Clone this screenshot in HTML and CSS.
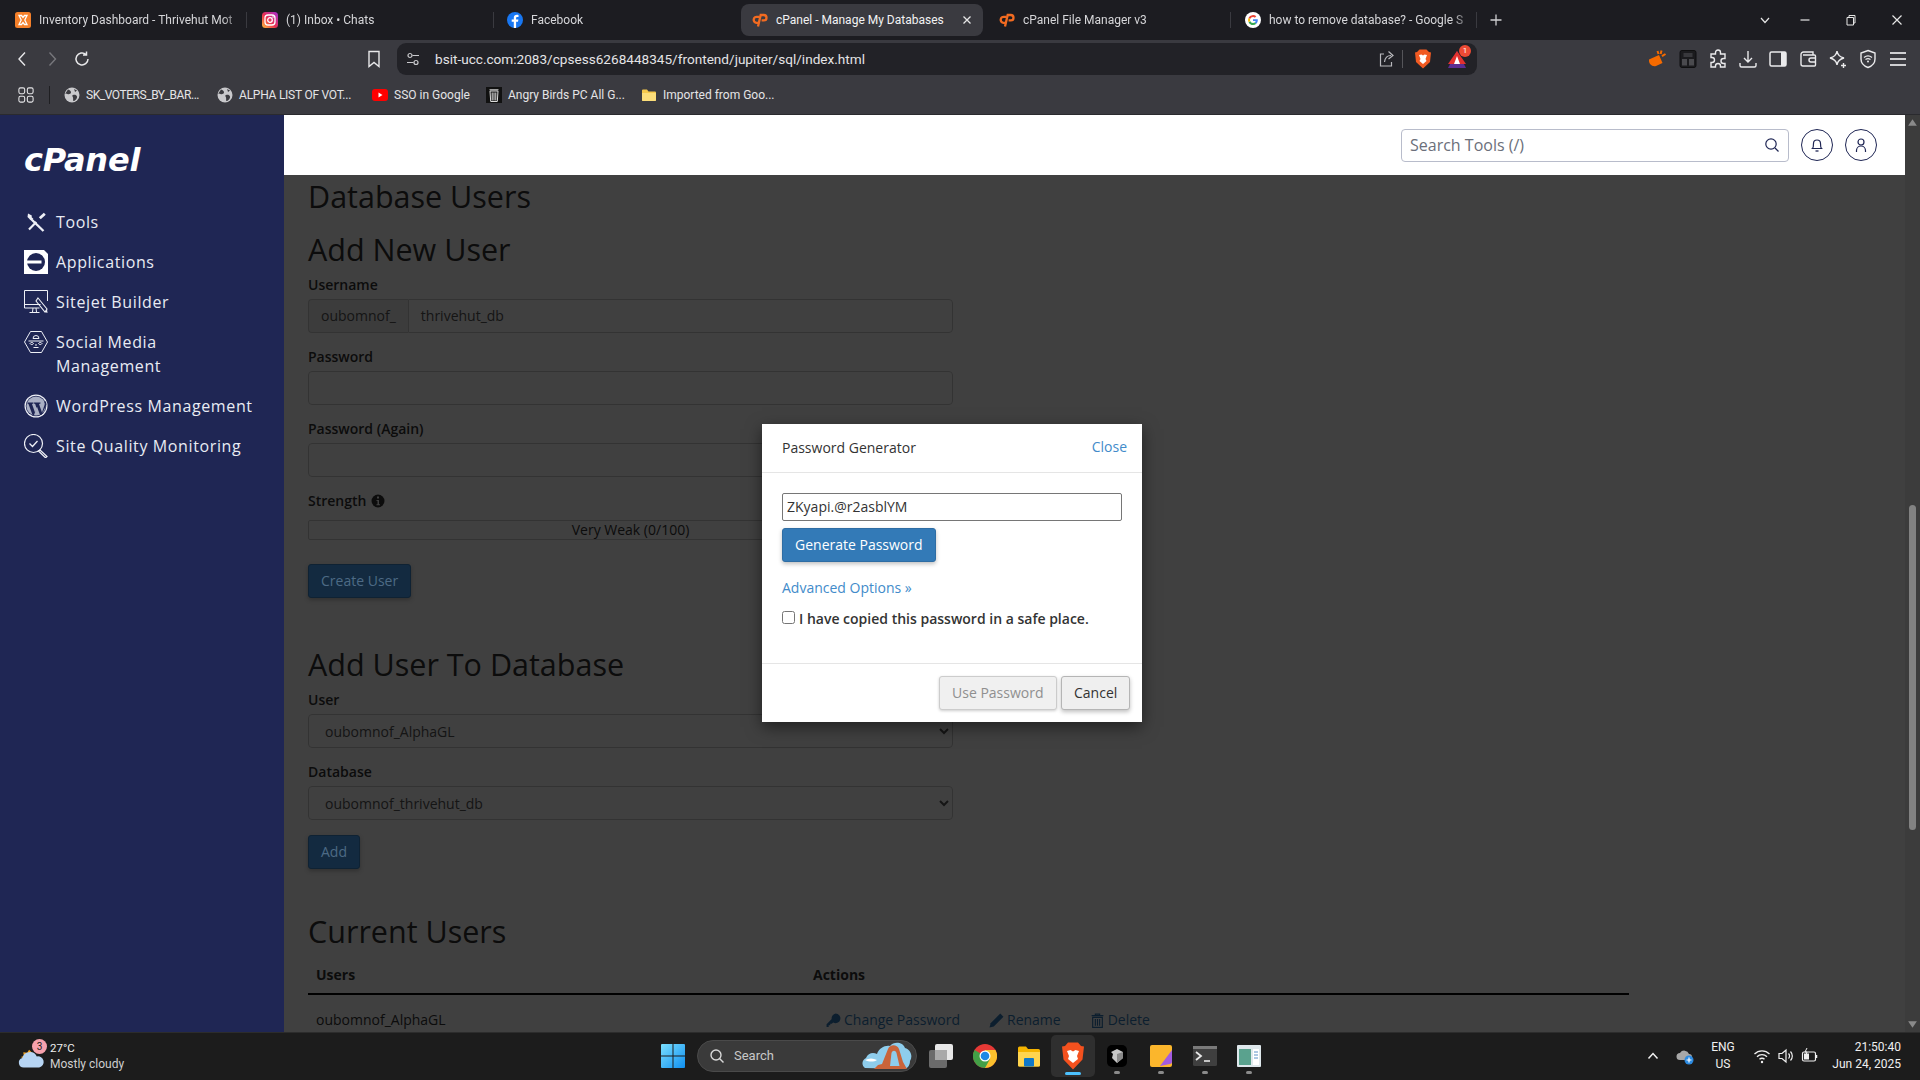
FILE: index.html
```html
<!DOCTYPE html>
<html lang="en">
<head>
<meta charset="utf-8">
<title>cPanel - Manage My Databases</title>
<link rel="stylesheet" href="styles.css">
</head>
<body>
<svg class="defs" width="0" height="0" aria-hidden="true">
  <symbol id="cp" viewBox="0 0 16 16">
    <path d="M7.600 4.800H5a3 3 0 0 0-.6 6H6.300" fill="none" stroke="#f26b21" stroke-width="2.300"/>
    <path d="M6 14.500L8.700 3h3.100a2.700 2.700 0 0 1 0 5.400H9.600" fill="none" stroke="#f26b21" stroke-width="2.300"/>
  </symbol>
  <symbol id="globe" viewBox="0 0 16 16">
    <circle cx="8" cy="8" r="7.500" fill="#c9c9cc"/>
    <path d="M4 2.500c2 .5 3 1.500 3 3S4.500 7.500 3.500 7 1.500 6 1 7M9 8c2-.5 3.500 0 4 1.500s-1.500 4-3 4.500-.5-2-1-3.500S7.500 8.500 9 8zM10 1.500c1 1 1.500 1.500 3 2l-2 1.500z" fill="#3b3b40"/>
  </symbol>
</svg>

<header class="tabstrip">
  <div class="tab tab-sep">
    <svg class="ti" viewBox="0 0 16 16"><rect width="16" height="16" rx="2.500" fill="#f5802a"/><path d="M4 3.500h2.500L8 5.500l1.500-2H12l-2.200 4.500L12 12.500H9.500L8 10.500l-1.500 2H4l2.200-4.500z" fill="none" stroke="#fff" stroke-width="1.300"/></svg>
    <span class="tt">Inventory Dashboard - Thrivehut Mot</span>
  </div>
  <div class="tab tab-sep">
    <svg class="ti" viewBox="0 0 16 16"><defs><linearGradient id="ig" x1="0" y1="1" x2="1" y2="0"><stop offset="0" stop-color="#fdc13c"/><stop offset=".45" stop-color="#e8304f"/><stop offset="1" stop-color="#a52fd3"/></linearGradient></defs><rect width="16" height="16" rx="3.500" fill="url(#ig)"/><rect x="3" y="3" width="10" height="10" rx="3" fill="none" stroke="#fff" stroke-width="1.300"/><circle cx="8" cy="8" r="2.300" fill="none" stroke="#fff" stroke-width="1.300"/><circle cx="11" cy="5" r=".8" fill="#fff"/></svg>
    <span class="tt">(1) Inbox • Chats</span>
  </div>
  <div class="tab tab-fb">
    <svg class="ti" viewBox="0 0 16 16"><circle cx="8" cy="8" r="8" fill="#1877f2"/><path d="M9.100 16V9.800h1.900l.4-2.300H9.100V6.100c0-.7.300-1.200 1.300-1.200h1.100v-2C11.100 2.800 10.500 2.700 9.900 2.700 8 2.700 6.800 3.800 6.800 5.800v1.700H4.700v2.300h2.100V16z" fill="#fff"/></svg>
    <span class="tt">Facebook</span>
  </div>
  <div class="tab tab-active">
    <svg class="ti"><use href="#cp"/></svg>
    <span class="tt">cPanel - Manage My Databases</span>
    <svg class="tclose" viewBox="0 0 10 10"><path d="M1.500 1.500l7 7M8.500 1.500l-7 7" stroke="#e6e6e6" stroke-width="1.300"/></svg>
  </div>
  <div class="tab tab-sep tab-plain">
    <svg class="ti"><use href="#cp"/></svg>
    <span class="tt">cPanel File Manager v3</span>
  </div>
  <div class="tab tab-sep tab-last">
    <svg class="ti" viewBox="0 0 16 16"><circle cx="8" cy="8" r="8" fill="#fff"/><path d="M12.800 8.200c0-.4 0-.7-.1-1H8v1.900h2.700a2.400 2.400 0 0 1-1 1.500l1.600 1.200c.9-.9 1.500-2.100 1.500-3.600z" fill="#4285f4"/><path d="M8 13c1.300 0 2.400-.4 3.300-1.200l-1.600-1.200c-.4.300-1 .5-1.700.5-1.300 0-2.400-.9-2.800-2l-1.600 1.300C4.400 11.900 6.100 13 8 13z" fill="#34a853"/><path d="M5.200 9.100a3 3 0 0 1 0-2.100L3.600 5.700a5 5 0 0 0 0 4.600z" fill="#fbbc05"/><path d="M8 5c.7 0 1.400.3 1.900.7l1.400-1.400A5 5 0 0 0 3.600 5.700L5.200 7C5.600 5.800 6.700 5 8 5z" fill="#ea4335"/></svg>
    <span class="tt">how to remove database? - Google S</span>
  </div>
  <svg class="newtab" viewBox="0 0 12 12"><path d="M6 .5v11M.5 6h11" stroke="#cfcfd2" stroke-width="1.300"/></svg>
  <div class="winctl">
    <svg class="chev" viewBox="0 0 12 12"><path d="M2 4l4 4.500L10 4" fill="none" stroke="#e6e6e6" stroke-width="1.200"/></svg>
    <svg viewBox="0 0 12 12"><path d="M1.500 6h9" stroke="#e6e6e6" stroke-width="1.200"/></svg>
    <svg viewBox="0 0 12 12"><path d="M2 3.500h6.500V11H2zM4 3.500V1.500h6V9H8.500" fill="none" stroke="#e6e6e6" stroke-width="1"/></svg>
    <svg viewBox="0 0 12 12"><path d="M1.500 1.500l9 9M10.500 1.500l-9 9" stroke="#e6e6e6" stroke-width="1.200"/></svg>
  </div>
</header>

<div class="toolbar">
  <div class="navbtns">
    <svg viewBox="0 0 18 18"><path d="M12 2.500L6 9l6 6.500" fill="none" stroke="#e8e8ea" stroke-width="1.400"/></svg>
    <svg viewBox="0 0 18 18"><path d="M6.500 2.500l6 6.500-6 6.500" fill="none" stroke="#77777c" stroke-width="1.400"/></svg>
    <svg viewBox="0 0 18 18"><path d="M15 9a6 6 0 1 1-2-4.500M13.500 1.500v3.500H10" fill="none" stroke="#e8e8ea" stroke-width="1.500"/></svg>
  </div>
  <svg class="bookmark" viewBox="0 0 18 18"><path d="M4 1.500h10v15l-5-4-5 4z" fill="none" stroke="#e8e8ea" stroke-width="1.400"/></svg>
  <div class="address">
    <svg class="tune" viewBox="0 0 16 16"><circle cx="5" cy="4.500" r="2" fill="none" stroke="#c9c9cc" stroke-width="1.200"/><path d="M7.500 4.500H14M2 11.500h6.500" stroke="#c9c9cc" stroke-width="1.200"/><circle cx="11" cy="11.500" r="2" fill="none" stroke="#c9c9cc" stroke-width="1.200"/></svg>
    <span class="url">bsit-ucc.com:2083/cpsess6268448345/frontend/jupiter/sql/index.html</span>
    <svg class="share" viewBox="0 0 18 18"><path d="M6 4H2.500v12h11v-4M6.500 12C7 8 9.500 5.500 13 5.500M10.500 1.500L15 5.500 10.500 9" fill="none" stroke="#b9b9bd" stroke-width="1.200"/></svg>
    <span class="addr-sep"></span>
    <svg class="brave" viewBox="0 0 18 20"><path d="M3 3l2.500-2.500h7L15 3l2 .5-1 9.500-7 6.500L2 13 1 3.500z" fill="#f15a22"/><path d="M5 6l2.500-.5L9 6.500l1.500-1L13 6l-1.500 4 1 2L9 15l-3.500-3 1-2z" fill="#fff"/></svg>
    <div class="rewards">
      <svg viewBox="0 0 20 20"><path d="M10 2l9 17H1z" fill="#5c2d91"/><path d="M10 2l9 13H1z" fill="#e3312f"/><path d="M10 7l3 8H7z" fill="#fff"/></svg>
      <span class="rbadge">1</span>
    </div>
  </div>
  <div class="exts">
    <svg viewBox="0 0 20 20"><path d="M1 10.500L11 6l3.500 8L8 17c-4 1-7.500-2-7-6.500z" fill="#f56a00"/><path d="M9.500 2l1 3M13.500 1.500l-.8 3.500M17.500 5l-3.500 2.200" stroke="#f56a00" stroke-width="2"/></svg>
    <svg viewBox="0 0 20 20"><rect x="2" y="1.500" width="16" height="17" rx="2" fill="#1b1b1e" stroke="#0f0f10"/><rect x="5.500" y="4" width="9" height="4" fill="#38383c"/><rect x="4" y="10" width="5" height="6.500" fill="#4a4a4e"/><rect x="11" y="10" width="5" height="6.500" fill="#4a4a4e"/></svg>
    <svg viewBox="0 0 20 20"><path d="M7.500 3.500a2.500 2.500 0 0 1 5 0V5H17v4.500h-1.500a2.500 2.500 0 0 0 0 5H17V18h-4.500v-1a2.500 2.500 0 0 0-5 0v1H3v-4.500h1a2.500 2.500 0 0 0 0-5H3V5h4.500z" fill="none" stroke="#eaeaec" stroke-width="1.400"/></svg>
    <svg viewBox="0 0 20 20"><path d="M10 2v10.500M6 9l4 4 4-4M2 14v2.500a1.500 1.500 0 0 0 1.500 1.500h13a1.500 1.500 0 0 0 1.500-1.500V14" fill="none" stroke="#eaeaec" stroke-width="1.400"/></svg>
    <svg viewBox="0 0 20 20"><rect x="2" y="3" width="16" height="14" rx="1.500" fill="none" stroke="#eaeaec" stroke-width="1.500"/><rect x="13" y="3" width="5" height="14" fill="#eaeaec"/></svg>
    <svg viewBox="0 0 20 20"><path d="M3 5.500A2.500 2.500 0 0 1 5.500 3H15v3M3 5.500V15a2 2 0 0 0 2 2h11.500a1 1 0 0 0 1-1V7a1 1 0 0 0-1-1H5M17.500 9H13a2 2 0 0 0 0 4h4.500" fill="none" stroke="#eaeaec" stroke-width="1.400"/></svg>
    <svg viewBox="0 0 20 20"><path d="M9 2c.6 4 2.500 6 7 7-4.500 1-6.400 3-7 7-.6-4-2.500-6-7-7 4.500-1 6.400-3 7-7zM15.500 14v5M13 16.500h5" fill="none" stroke="#eaeaec" stroke-width="1.400"/></svg>
    <svg viewBox="0 0 20 20"><path d="M10 1.500l7 2.500v6c0 4-3 7-7 8.500-4-1.500-7-4.500-7-8.500V4z" fill="none" stroke="#eaeaec" stroke-width="1.400"/><path d="M6 8.500c2.500-2 5.500-2 8 0M7.500 10.500c1.500-1 3.500-1 5 0" fill="none" stroke="#eaeaec" stroke-width="1.200"/><circle cx="10" cy="12.500" r="1" fill="#eaeaec"/></svg>
    <svg viewBox="0 0 20 20"><path d="M2 4h16M2 10h16M2 16h16" stroke="#d0d0d3" stroke-width="2"/></svg>
  </div>
</div>

<nav class="bookmarks">
  <svg class="apps" viewBox="0 0 18 18"><rect x="1" y="1" width="6.500" height="6.500" rx="1.800" fill="none" stroke="#e6e6e8" stroke-width="1.200"/><rect x="10.500" y="1" width="6.500" height="6.500" rx="1.800" fill="none" stroke="#e6e6e8" stroke-width="1.200"/><rect x="1" y="10.500" width="6.500" height="6.500" rx="1.800" fill="none" stroke="#e6e6e8" stroke-width="1.200"/><rect x="10.500" y="10.500" width="6.500" height="6.500" rx="1.800" fill="none" stroke="#e6e6e8" stroke-width="1.200"/></svg>
  <span class="bm-sep"></span>
  <a class="bm bm-sk"><svg class="bi"><use href="#globe"/></svg>SK_VOTERS_BY_BAR...</a>
  <a class="bm bm-al"><svg class="bi"><use href="#globe"/></svg>ALPHA LIST OF VOT...</a>
  <a class="bm bm-yt"><svg class="bi" viewBox="0 0 16 16"><rect y="2" width="16" height="12" rx="3" fill="#f00"/><path d="M6.500 5.500L10.500 8l-4 2.500z" fill="#fff"/></svg>SSO in Google</a>
  <a class="bm bm-yt"><svg class="bi" viewBox="0 0 16 16"><rect width="16" height="16" fill="#111"/><path d="M4 4h8l-.7 10.500H4.700zM3.500 2.800h9M6.200 5.500v8M8 5.500v8M9.800 5.500v8" fill="none" stroke="#ddd" stroke-width="1"/></svg>Angry Birds PC All G...</a>
  <a class="bm"><svg class="bi" viewBox="0 0 16 16"><path d="M1 3.500A1 1 0 0 1 2 2.500h4l1.500 2H14a1 1 0 0 1 1 1V13a1 1 0 0 1-1 1H2a1 1 0 0 1-1-1z" fill="#f5c84c"/><path d="M1 6h14v7a1 1 0 0 1-1 1H2a1 1 0 0 1-1-1z" fill="#fbdd7a"/></svg>Imported from Goo...</a>
</nav>

<div class="app">
  <aside class="sidebar">
    <div class="logo">cPanel</div>
    <ul class="sidenav">
      <li><svg viewBox="0 0 24 24"><path d="M6.500 8.500L19.500 21" fill="none" stroke="#eef0f6" stroke-width="2.400"/><path d="M4 3.500L3.500 7l2.500 2.500 3.500-.5-1.800-1.800.1-1.700z" fill="#eef0f6"/><path d="M20.800 3.800L15.800 8.300" stroke="#eef0f6" stroke-width="2.800"/><path d="M12.300 12L5 19.500" stroke="#eef0f6" stroke-width="2.200"/></svg><span>Tools</span></li>
      <li><svg viewBox="0 0 24 24"><path d="M0 0h20l4 4v20H0z" fill="#fff"/><circle cx="12" cy="12" r="9" fill="#1f2654"/><rect x="3" y="10.500" width="14.500" height="3" fill="#fff"/></svg><span>Applications</span></li>
      <li><svg viewBox="0 0 24 24"><path d="M23.500 11V.5H.5V18h15M.5 14.500h16" fill="none" stroke="#eef0f6" stroke-width="1"/><path d="M9 18l-.5 4M12 18l.5 4M5.500 22.500h10" fill="none" stroke="#eef0f6" stroke-width="1"/><path d="M14 8l9 11-2 3-9-11z" fill="none" stroke="#eef0f6" stroke-width="1.100"/><path d="M21 22l2.500 1-.5-4z" fill="#eef0f6"/></svg><span>Sitejet Builder</span></li>
      <li><svg viewBox="0 0 24 24"><path d="M6.500 1.500h11L23.500 12l-6 10.500h-11L.5 12z" fill="none" stroke="#eef0f6" stroke-width="1"/><path d="M9 8.500a3 3 0 0 1 6 0zM4.500 11h15M6 13.500a2 2 0 0 1 3.500 0 2 2 0 0 1-3.500 0zM14.500 13.500a2 2 0 0 1 3.500 0 2 2 0 0 1-3.500 0zM11 15h2M9.500 17.500h5" fill="none" stroke="#eef0f6" stroke-width="1"/></svg><span>Social Media Management</span></li>
      <li><svg viewBox="0 0 24 24"><circle cx="12" cy="12" r="11.500" fill="#eef0f6"/><circle cx="12" cy="12" r="10.300" fill="#1f2654"/><circle cx="12" cy="12" r="9.600" fill="#aab0c4"/><path d="M3.500 8.500h6v1L8 10l3 8.500 1.500-4.500-1.300-4-1.200-.5v-1h6.500v1l-1.500.5 3 8.500 2.500-7.500c.5-1.500 0-2.500-.5-3.500h2l.6 3L17.500 21h-1.500l-3-8.300L10 21H8.500L4.500 10l-1-.5z" fill="#1f2654"/></svg><span>WordPress Management</span></li>
      <li><svg viewBox="0 0 24 24"><circle cx="9.500" cy="9.500" r="9" fill="none" stroke="#eef0f6" stroke-width="1.200"/><path d="M5.500 9.500l3 3L13.500 7" fill="none" stroke="#eef0f6" stroke-width="1.300"/><path d="M16 16l7 6.500-1.500 1.300-7-6.800z" fill="none" stroke="#eef0f6" stroke-width="1.200"/></svg><span>Site Quality Monitoring</span></li>
    </ul>
  </aside>

  <div class="mainwrap">
    <div class="topbar">
      <div class="search">
        <span>Search Tools (/)</span>
        <svg viewBox="0 0 16 16"><circle cx="7" cy="7" r="5.200" fill="none" stroke="#1f2654" stroke-width="1.200"/><path d="M11 11l3.500 3.500" stroke="#1f2654" stroke-width="1.200"/></svg>
      </div>
      <span class="circle"><svg viewBox="0 0 16 16"><path d="M3.500 11.500c1-1 1-2.500 1-5a3.500 3.500 0 0 1 7 0c0 2.500 0 4 1 5z" fill="none" stroke="#1f2654" stroke-width="1.200"/><path d="M6.500 14h3" stroke="#1f2654" stroke-width="1.300"/></svg></span>
      <span class="circle"><svg viewBox="0 0 16 16"><circle cx="8" cy="5" r="3" fill="none" stroke="#1f2654" stroke-width="1.200"/><path d="M3.500 15v-1.500c0-2.500 2-4.500 4.500-4.500s4.500 2 4.500 4.500V15" fill="none" stroke="#1f2654" stroke-width="1.200"/></svg></span>
    </div>

    <main class="content">
      <h2 class="h-db">Database Users</h2>
      <h2 class="h-new">Add New User</h2>
      <form class="form">
        <div class="group">
          <label>Username</label>
          <div class="inputgroup"><span class="addon">oubomnof_</span><span class="ctl ctl-joined">thrivehut_db</span></div>
        </div>
        <div class="group"><label>Password</label><div class="ctl"></div></div>
        <div class="group"><label>Password (Again)</label><div class="ctl"></div></div>
        <div class="group-strength">
          <label>Strength <svg class="info" viewBox="0 0 14 14"><circle cx="7" cy="7" r="6.500" fill="#333"/><rect x="6" y="2.500" width="2" height="2" fill="#fff"/><path d="M5.500 6h2.500v4.200h1v1H5.500v-1h1V7h-1z" fill="#fff"/></svg></label>
          <div class="meter">Very Weak (0/100)</div>
        </div>
        <span class="btn btn-primary">Create User</span>
      </form>

      <h2 class="h-add">Add User To Database</h2>
      <form class="form">
        <div class="group"><label>User</label>
          <select class="ctl-select"><option>oubomnof_AlphaGL</option></select></div>
        <div class="group-last"><label>Database</label>
          <select class="ctl-select"><option>oubomnof_thrivehut_db</option></select></div>
        <span class="btn btn-primary">Add</span>
      </form>

      <h2 class="h-cur">Current Users</h2>
      <table class="users">
        <thead><tr><th class="col-user">Users</th><th>Actions</th></tr></thead>
        <tbody><tr>
          <td>oubomnof_AlphaGL</td>
          <td class="actions">
            <a><svg viewBox="0 0 14 14"><path d="M9 .5a4.500 4.500 0 1 1-2.300 8.400L5.500 10H4v1.500H2.500V13H.5v-2.500l4.800-4.800A4.500 4.500 0 0 1 9 .5z" fill="#337ab7"/></svg>Change Password</a>
            <a><svg viewBox="0 0 14 14"><path d="M10.500 .5l3 3-9 9-4 1 1-4z" fill="#337ab7"/></svg>Rename</a>
            <a><svg viewBox="0 0 14 14"><path d="M1.500 2.500h11M5 2.500V1h4v1.500M2.500 4h9v9.500h-9zM5 5.500v6.500M7 5.500v6.500M9 5.500v6.500" fill="none" stroke="#337ab7" stroke-width="1.100"/></svg>Delete</a>
          </td>
        </tr></tbody>
      </table>
      <div class="overlay"></div>
      <section class="modal">
        <div class="modal-head"><span>Password Generator</span><a class="link close">Close</a></div>
        <div class="modal-body">
          <div class="pw">ZKyapi.@r2asblYM</div>
          <span class="btn btn-gen">Generate Password</span>
          <a class="link adv">Advanced Options »</a>
          <label class="copied"><input type="checkbox">I have copied this password in a safe place.</label>
        </div>
        <div class="modal-foot"><span class="btn btn-use">Use Password</span><span class="btn btn-cancel">Cancel</span></div>
      </section>
    </main>
  </div>

  <div class="scrollbar">
    <svg viewBox="0 0 10 10"><path d="M5 2l4 6H1z" fill="#8a8a8a"/></svg>
    <div class="track"><div class="thumb"></div></div>
    <svg viewBox="0 0 10 10"><path d="M5 8L1 2h8z" fill="#8a8a8a"/></svg>
  </div>
</div>

<footer class="taskbar">
  <div class="weather">
    <div class="wicon">
      <svg viewBox="0 0 28 28"><path d="M3 15l3-1-.5-4 4 .5 2-3 5 5-8 6z" fill="#f5a623"/><path d="M6 26a5 5 0 0 1-1.500-9.800A8 8 0 0 1 19.500 14.500a5.800 5.800 0 0 1 2.500 11.500z" fill="#b6d4f3"/></svg>
      <span class="wbadge">3</span>
    </div>
    <div class="wtext"><span>27°C</span><span class="wsub">Mostly cloudy</span></div>
  </div>
  <div class="center">
    <svg class="start" viewBox="0 0 24 24"><defs><linearGradient id="win" x1="0" y1="0" x2="1" y2="1"><stop offset="0" stop-color="#7be0ff"/><stop offset="1" stop-color="#0f8ff0"/></linearGradient></defs><path d="M0 1a1 1 0 0 1 1-1h10.500v11.500H0zM12.500 0H23a1 1 0 0 1 1 1v10.500H12.500zM0 12.500h11.500V24H1a1 1 0 0 1-1-1zM12.500 12.500H24V23a1 1 0 0 1-1 1H12.500z" fill="url(#win)"/></svg>
    <div class="tsearch">
      <svg class="tsicon" viewBox="0 0 16 16"><circle cx="7" cy="7" r="5" fill="none" stroke="#d8d8d8" stroke-width="1.400"/><path d="M10.500 10.500L14.500 14.500" stroke="#d8d8d8" stroke-width="1.500"/></svg>
      <span>Search</span>
      <svg class="scene" viewBox="0 0 50 30"><path d="M3 27c-4-3-3-8 1-10 2-5 7-6 11-4 2-6 8-9 13-8 4-5 13-4 15 2 6 2 8 8 5 13 0 5-3 8-7 8z" fill="#8ecdec"/><path d="M12 28l4-4 4-1 6-15c2-5 9-5 11 0l4 13 4 7z" fill="#c9643a"/><path d="M28 25l1.500-13c1-3 4-3 5 0l3 13z" fill="#8ecdec"/><path d="M3 19c4-2 8-2 12 0-3 2-8 2-12 0z" fill="#fff"/></svg>
    </div>
    <svg class="tasks taskview" viewBox="0 0 24 24"><rect x="0" y="6" width="18" height="18" rx="2" fill="#6b6b6b"/><rect x="6" y="0" width="18" height="16" rx="2" fill="#e8e8e8"/><rect x="6" y="6" width="12" height="10" fill="#a9a9a9"/></svg>
    <div class="tk"><svg viewBox="0 0 24 24"><circle cx="12" cy="12" r="12" fill="#e53935"/><path d="M12 24a12 12 0 0 0 10.400-18H12z" fill="#fbc02d"/><path d="M1.600 6A12 12 0 0 0 12 24l5-9z" fill="#43a047"/><circle cx="12" cy="12" r="5.500" fill="#fff"/><circle cx="12" cy="12" r="4.300" fill="#1e88e5"/></svg></div>
    <div class="tk"><svg viewBox="0 0 24 24"><path d="M1 4a1.500 1.500 0 0 1 1.500-1.500H9l2 2.500h10.500A1.500 1.500 0 0 1 23 6.500V21a1.500 1.500 0 0 1-1.500 1.500h-19A1.500 1.500 0 0 1 1 21z" fill="#f5b400"/><path d="M1 8h22v13a1.500 1.500 0 0 1-1.500 1.500h-19A1.500 1.500 0 0 1 1 21z" fill="#ffd54f"/><rect x="7" y="14" width="10" height="8.500" rx="1" fill="#0f78c8"/></svg></div>
    <div class="tk tk-active"><svg viewBox="0 0 24 28"><path d="M4 4l3-3.500h10L20 4l3 .5-1.500 13-9.500 10-9.500-10L1 4.500z" fill="#f4511e"/><path d="M6 9l3.500-1L12 9.500 14.500 8l3.500 1-2 5 1 3-5 4-5-4 1-3z" fill="#fff"/></svg><i class="ind"></i></div>
    <div class="tk tk-run"><svg viewBox="0 0 24 24"><rect x="2" y="1" width="20" height="22" rx="5" fill="#000"/><path d="M12 5l6 3v6l-6 5-5-5 1-4-2-2z" fill="#c5c5c5"/><path d="M12 10l6-2v6l-6 5z" fill="#888"/></svg><i class="dot"></i></div>
    <div class="tk tk-run"><svg viewBox="0 0 24 24"><rect x="1" y="1" width="22" height="22" rx="2" fill="#fbb62c"/><path d="M23 6L11 22l10-2c1 0 2-1 2-2z" fill="#a35ce0"/></svg><i class="dot"></i></div>
    <div class="tk tk-run"><svg viewBox="0 0 24 24"><rect y="2" width="24" height="20" rx="1.500" fill="#3f3f3f"/><rect y="2" width="24" height="3" fill="#7a7a7a"/><path d="M3 8l5 4-5 4" fill="none" stroke="#e8e8e8" stroke-width="1.800"/><path d="M11 17h6" stroke="#e8e8e8" stroke-width="1.600"/></svg><i class="dot"></i></div>
    <div class="tk tk-run"><svg viewBox="0 0 24 24"><rect y="1" width="24" height="22" rx="1" fill="#dfe8ec"/><rect x="2" y="5" width="12" height="16" fill="#5aa28e"/><rect x="16" y="5" width="6" height="16" fill="#fff"/><path d="M17 8h4M17 11h4M17 14h4" stroke="#5a90c8"/></svg><i class="dot"></i></div>
  </div>
  <div class="tray">
    <svg class="tr-caret" viewBox="0 0 12 12"><path d="M1.500 8.500L6 3.500l4.500 5" fill="none" stroke="#f0f0f0" stroke-width="1.500"/></svg>
    <svg class="tr-cloud" viewBox="0 0 18 18"><path d="M4 13a3.500 3.500 0 0 1 0-7 5 5 0 0 1 9 1 3 3 0 0 1 0 6z" fill="#a8a8a8"/><circle cx="13" cy="13" r="4.500" fill="#2c8ae0"/><path d="M13 10.500v5M10.500 13h5" stroke="#fff" stroke-width="1.200"/></svg>
    <div class="lang"><span>ENG</span><span>US</span></div>
    <svg class="tr-ic" viewBox="0 0 18 18"><path d="M1.500 7a10.500 10.500 0 0 1 15 0M4 9.800a7 7 0 0 1 10 0M6.500 12.300a3.500 3.500 0 0 1 5 0" fill="none" stroke="#f0f0f0" stroke-width="1.300"/><circle cx="9" cy="15" r="1.200" fill="#f0f0f0"/></svg>
    <svg class="tr-ic" viewBox="0 0 18 18"><path d="M2 6.500h3l4-3.500v12l-4-3.500H2z" fill="none" stroke="#f0f0f0" stroke-width="1.200"/><path d="M11.500 6.500a3.500 3.500 0 0 1 0 5M13.500 4.500a6.500 6.500 0 0 1 0 9" fill="none" stroke="#f0f0f0" stroke-width="1.200"/></svg>
    <svg class="tr-ic" viewBox="0 0 18 18"><rect x="1.500" y="5" width="13" height="9" rx="1.500" fill="none" stroke="#f0f0f0" stroke-width="1.200"/><rect x="3" y="6.500" width="5" height="6" fill="#f0f0f0"/><path d="M15.500 8v3" stroke="#f0f0f0" stroke-width="1.500"/><path d="M6 1L4 5h2l-1 3" fill="none" stroke="#f0f0f0" stroke-width="1"/></svg>
    <div class="clock"><span>21:50:40</span><span>Jun 24, 2025</span></div>
  </div>
</footer>
</body>
</html>
```
FILE: styles.css
```css
* { box-sizing: border-box; }
html, body { margin: 0; height: 100%; }
body {
  width: 1920px;
  height: 1080px;
  overflow: hidden;
  display: flex;
  flex-direction: column;
  font-family: "Open Sans", "Noto Sans", sans-serif;
  font-size: 14px;
  color: #333;
  background: #fff;
}
svg { display: block; flex: none; }
.defs { position: absolute; }

/* browser chrome */
.tabstrip {
  height: 40px;
  flex: none;
  display: flex;
  align-items: center;
  background: #1c1c21;
  font-family: Roboto, "Noto Sans", sans-serif;
  font-size: 12px;
  color: #d6d6d9;
}
.tab {
  width: 247px;
  height: 32px;
  padding: 0 0 0 15px;
  display: flex;
  align-items: center;
  gap: 8px;
}
.tab-sep::after { content: ""; width: 1px; height: 16px; background: #3a3a40; flex: none; }
.tab-fb { padding-left: 13px; }
.tab-active {
  width: 242px;
  padding-left: 11px;
  background: #3a3a40;
  border-radius: 8px;
  color: #f2f2f3;
}
.tab-plain { width: 248px; padding-left: 16px; }
.tab-last { width: 246px; padding-left: 14px; }
.ti { width: 16px; height: 16px; }
.tt {
  flex: 1;
  min-width: 0;
  white-space: nowrap;
  -webkit-mask-image: linear-gradient(90deg, #000 92%, rgba(0,0,0,.25));
  mask-image: linear-gradient(90deg, #000 92%, rgba(0,0,0,.25));
}
.tab-active .tt { -webkit-mask-image: none; mask-image: none; }
.tclose { width: 10px; height: 10px; margin-right: 11px; }
.newtab { width: 12px; height: 12px; margin-left: 13px; }
.winctl { margin-left: auto; display: flex; align-items: center; gap: 34px; padding-right: 17px; }
.winctl svg { width: 12px; height: 12px; }
.winctl .chev { margin-right: -6px; }

.toolbar {
  height: 38px;
  flex: none;
  display: flex;
  align-items: center;
  padding: 0 0 0 7px;
  background: #3a3a40;
}
.navbtns { display: flex; width: 90px; }
.navbtns svg { width: 18px; height: 18px; margin: 0 6px; }
.bookmark { width: 18px; height: 18px; margin: 0 14px 0 268px; }
.address {
  width: 1080px;
  height: 32px;
  display: flex;
  align-items: center;
  padding: 0 10px 0 8px;
  background: #222227;
  border-radius: 9px;
  font-family: Roboto, "Noto Sans", sans-serif;
  font-size: 13.600px;
  color: #e4e4e6;
}
.tune { width: 16px; height: 16px; }
.url { margin-left: 14px; }
.share { width: 18px; height: 18px; margin-left: auto; }
.addr-sep { width: 1px; height: 18px; margin: 0 11px 0 6px; background: #55555a; }
.brave { width: 18px; height: 20px; }
.rewards { position: relative; width: 20px; height: 20px; margin-left: 15px; }
.rewards svg { width: 20px; height: 20px; }
.rbadge {
  position: absolute;
  top: -4px;
  right: -4px;
  width: 12px;
  height: 12px;
  border-radius: 50%;
  background: #ec4a34;
  color: #fff;
  font-size: 8px;
  line-height: 12px;
  text-align: center;
}
.exts { display: flex; margin-left: 166px; }
.exts svg { width: 20px; height: 20px; margin: 0 5px; }

.bookmarks {
  height: 37px;
  flex: none;
  display: flex;
  align-items: center;
  padding: 0 0 2px 18px;
  background: #3a3a40;
  border-bottom: 1px solid #2a2a2e;
  font-family: Roboto, "Noto Sans", sans-serif;
  font-size: 12px;
  color: #e4e4e6;
}
.apps { width: 16px; height: 16px; }
.bm-sep { width: 1px; height: 18px; margin: 0 14px 0 15px; background: #1f1f22; }
.bm { display: flex; align-items: center; gap: 6px; margin-right: 18px; white-space: nowrap; }
.bm-sk { letter-spacing: -.45px; }
.bm-al { letter-spacing: -.25px; margin-right: 21px; }
.bm-yt { margin-right: 16px; }
.bi { width: 16px; height: 16px; }

/* app */
.app { flex: 1; min-height: 0; display: flex; }
.sidebar {
  width: 284px;
  flex: none;
  padding: 32px 24px 0;
  background: #1f2654;
  color: #e8ebf3;
}
.logo {
  height: 26px;
  font-family: "DejaVu Sans", sans-serif;
  font-size: 32px;
  line-height: 26px;
  font-weight: 700;
  font-style: italic;
  letter-spacing: -.2px;
  color: #fff;
}
.sidenav {
  list-style: none;
  margin: 37px 0 0;
  padding: 0;
  display: flex;
  flex-direction: column;
  gap: 16px;
  font-size: 16px;
  line-height: 24px;
  letter-spacing: .62px;
}
.sidenav li { display: flex; gap: 8px; }
.sidenav svg { width: 24px; height: 24px; }

.mainwrap { flex: 1; min-width: 0; display: flex; flex-direction: column; }
.topbar {
  height: 60px;
  flex: none;
  position: relative;
  z-index: 3;
  display: flex;
  align-items: center;
  justify-content: flex-end;
  gap: 12px;
  padding-right: 28px;
  background: #fff;
}
.search {
  width: 388px;
  height: 33px;
  display: flex;
  align-items: center;
  justify-content: space-between;
  padding: 0 8px;
  border: 1px solid #b8bccb;
  border-radius: 4px;
  font-size: 16px;
  color: #6b6f7a;
}
.search svg { width: 16px; height: 16px; }
.circle {
  width: 32px;
  height: 32px;
  display: flex;
  align-items: center;
  justify-content: center;
  border: 1px solid #1f2654;
  border-radius: 50%;
}
.circle svg { width: 16px; height: 16px; }

.content {
  flex: 1;
  min-height: 0;
  position: relative;
  overflow: hidden;
  padding: 0 0 0 24px;
  background: #fff;
}
h2 { margin: 0; font-size: 30.500px; font-weight: 400; line-height: 33px; color: #333; }
.h-db { margin-top: 5px; }
.h-new { margin-top: 20px; }
.h-add { margin-top: 50px; }
.h-cur { margin-top: 46px; }
.form { width: 645px; margin-top: 9px; }
label { display: block; font-weight: 600; line-height: 20px; }
.group { margin-bottom: 14px; }
.group label, .group-last label { margin-bottom: 4px; }
.group-last { margin-bottom: 15px; }
.group-strength { margin-bottom: 24px; }
.group-strength label { display: flex; align-items: center; gap: 5px; margin-bottom: 9px; }
.info { width: 14px; height: 14px; }
.ctl, .addon {
  display: block;
  height: 34px;
  padding: 6px 12px;
  border: 1px solid #ccc;
  border-radius: 4px;
  line-height: 20px;
  color: #555;
  background: #fff;
}
.inputgroup { display: flex; }
.addon { background: #eee; border-right: 0; border-radius: 4px 0 0 4px; }
.ctl-joined { flex: 1; border-radius: 0 4px 4px 0; }
.ctl-select {
  display: block;
  width: 100%;
  height: 34px;
  padding: 6px 12px;
  border: 1px solid #ccc;
  border-radius: 4px;
  background: #fff;
  font: inherit;
  color: #555;
}
.meter {
  height: 20px;
  border: 1px solid #ccc;
  border-radius: 2px;
  line-height: 18px;
  text-align: center;
  background: #fff;
}
.btn {
  display: inline-block;
  height: 34px;
  padding: 6px 12px;
  border: 1px solid #ccc;
  border-radius: 3px;
  line-height: 20px;
  box-shadow: 0 2px 4px rgba(0,0,0,.25);
  white-space: nowrap;
}
.btn-primary {
  position: relative;
  z-index: 1;
  background: #132a40;
  border-color: #0f2233;
  color: #4d6a85;
}
.users { width: 1321px; border-collapse: collapse; margin-top: 16px; }
.users th { padding: 0 8px 8px; height: 30px; text-align: left; font-weight: 700; border-bottom: 2px solid #000; }
.users td { padding: 15px 8px 8px; line-height: 20px; }
.col-user { width: 497px; }
.actions { display: flex; gap: 29px; padding-left: 21px !important; color: #337ab7; }
.actions a { display: flex; align-items: center; gap: 3px; }
.actions svg { width: 15px; height: 15px; }
.overlay { position: absolute; inset: 0; background: rgba(0,0,0,.75); }

.modal {
  position: absolute;
  z-index: 2;
  left: 478px;
  top: 249px;
  width: 380px;
  height: 298px;
  display: flex;
  flex-direction: column;
  background: #fff;
  box-shadow: 0 5px 15px rgba(0,0,0,.5);
}
.modal-head {
  height: 49px;
  flex: none;
  display: flex;
  align-items: center;
  justify-content: space-between;
  padding: 0 15px 1px 20px;
  border-bottom: 1px solid #e5e5e5;
}
.link { color: #428bca; }
.close { margin-bottom: 2px; }
.modal-body { flex: 1; display: flex; flex-direction: column; align-items: flex-start; padding: 20px 20px 0; }
.pw {
  width: 340px;
  height: 28px;
  padding: 0 4px;
  border: 1px solid #767676;
  border-radius: 2px;
  line-height: 26px;
  color: #333;
}
.btn-gen { margin-top: 7px; background: #337ab7; border-color: #2e6da4; color: #fff; }
.adv { margin-top: 16px; line-height: 20px; }
.copied { display: flex; align-items: center; margin-top: 11px; }
.copied input { width: 13px; height: 13px; margin: -3px 4px 0 0; }
.modal-foot {
  height: 59px;
  flex: none;
  display: flex;
  align-items: center;
  justify-content: flex-end;
  gap: 4px;
  padding: 0 12px 0 0;
  border-top: 1px solid #e5e5e5;
}
.btn-use { width: 118px; background: #f0f0f0; border-color: #ccc; color: #8f8f8f; box-shadow: 0 1px 3px rgba(0,0,0,.2); }
.btn-cancel { width: 69px; background: #efefef; border-color: #b5b5b5; color: #333; }

.scrollbar { width: 15px; flex: none; display: flex; flex-direction: column; align-items: center; background: #3c3c3c; }
.scrollbar svg { width: 11px; height: 15px; }
.track { flex: 1; width: 100%; padding: 375px 4px 0; }
.thumb { width: 7px; height: 325px; background: #828282; border-radius: 4px; }

/* taskbar */
.taskbar {
  height: 48px;
  flex: none;
  display: flex;
  align-items: center;
  position: relative;
  padding-bottom: 2px;
  background: #1c1c1c;
  border-top: 1px solid #2c2c2c;
  font-family: Roboto, "Noto Sans", sans-serif;
  color: #f0f0f0;
  font-size: 12px;
}
.weather { width: 661px; display: flex; align-items: center; gap: 5px; padding-left: 18px; }
.wicon { position: relative; width: 27px; height: 28px; }
.wicon svg { width: 27px; height: 28px; }
.wbadge {
  position: absolute;
  top: -3px;
  right: -2px;
  width: 15px;
  height: 15px;
  border-radius: 50%;
  background: #f7a1ad;
  color: #222;
  font-size: 10px;
  line-height: 15px;
  text-align: center;
}
.wtext { display: flex; flex-direction: column; line-height: 16px; font-size: 11.500px; }
.wsub { color: #cfcfcf; font-size: 12px; }
.center { display: flex; align-items: center; }
.start { width: 24px; height: 24px; }
.tsearch {
  width: 220px;
  height: 32px;
  margin-left: 12px;
  display: flex;
  align-items: center;
  padding: 0 4px 0 11px;
  gap: 9px;
  background: #3a3a3a;
  border: 1px solid #4a4a4a;
  border-radius: 16px;
  font-size: 13px;
  color: #c8c8c8;
}
.tsicon { width: 16px; height: 16px; }
.scene { width: 50px; height: 30px; margin-left: auto; }
.taskview { width: 24px; height: 24px; margin: 0 10px 0 12px; }
.tk { width: 44px; height: 42px; position: relative; display: flex; align-items: center; justify-content: center; border-radius: 5px; }
.tk svg { width: 24px; height: 24px; }
.tk-active { background: #2f2f2f; }
.tk-active svg { height: 28px; }
.ind { position: absolute; bottom: 2px; left: 14px; width: 16px; height: 3px; border-radius: 2px; background: #4cc2ff; }
.dot { position: absolute; bottom: 3px; left: 19px; width: 6px; height: 3px; border-radius: 2px; background: #8b8b8b; }
.tray { margin-left: auto; display: flex; align-items: center; padding-right: 19px; }
.tr-caret { width: 12px; height: 12px; }
.tr-cloud { width: 18px; height: 18px; margin-left: 17px; }
.lang { width: 40px; margin-left: 9px; display: flex; flex-direction: column; align-items: center; line-height: 17px; }
.tr-ic { width: 18px; height: 18px; margin-left: 6px; }
.lang + .tr-ic { margin-left: 10px; }
.clock { width: 82px; display: flex; flex-direction: column; align-items: flex-end; line-height: 17px; }
```
